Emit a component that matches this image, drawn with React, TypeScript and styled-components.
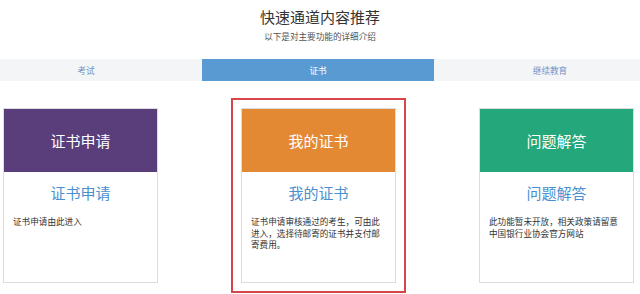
import React, { FC } from 'react';
import styled, { createGlobalStyle } from 'styled-components';

const GlobalStyle = createGlobalStyle`
  body {
    margin: 0;
    background: #fff;
    font-family: "Noto Sans CJK SC", "Liberation Sans", sans-serif;
    overflow: hidden;
  }
`;

const Page = styled.div`
  width: 640px;
  height: 294px;
  overflow: hidden;
`;

const Heading = styled.div`
  display: flex;
  flex-direction: column;
  align-items: center;
  padding-top: 7px;
`;

const Title = styled.h1`
  margin: 0;
  font-size: 15px;
  line-height: 20px;
  font-weight: 400;
  color: #333;
`;

const Subtitle = styled.p`
  margin: 3px 0 0;
  font-size: 8.6px;
  line-height: 12px;
  color: #555;
`;

const TabBar = styled.div`
  display: grid;
  grid-template-columns: repeat(3, 232px);
  margin: 17px 0 0 -30px;
  height: 22px;
`;

const Tab = styled.div<{ $active?: boolean }>`
  display: flex;
  align-items: center;
  justify-content: center;
  font-size: 8.6px;
  background: ${(p) => (p.$active ? '#5a9ad2' : '#f4f5f7')};
  color: ${(p) => (p.$active ? '#fff' : '#6f94c8')};
`;

const CardRow = styled.div`
  display: flex;
  align-items: flex-start;
  gap: 83px;
  padding-left: 3px;
  margin-top: 27px;
`;

const Card = styled.div<{ $highlight?: boolean }>`
  width: 155px;
  height: 175px;
  box-sizing: border-box;
  border: 1px solid #dcdcdc;
  display: flex;
  flex-direction: column;
  outline: ${(p) => (p.$highlight ? '2px solid #d9434a' : 'none')};
  outline-offset: 8px;
`;

const CardHead = styled.div<{ $color: string }>`
  height: 63px;
  background: ${(p) => p.$color};
  color: #fff;
  font-size: 15px;
  display: flex;
  align-items: center;
  justify-content: center;
`;

const CardBody = styled.div`
  padding: 11px 9px 0 9px;
  display: flex;
  flex-direction: column;
`;

const CardTitle = styled.div`
  text-align: center;
  font-size: 15px;
  line-height: 20px;
  color: #4a8fcf;
`;

const CardText = styled.p`
  margin: 13px 0 0;
  font-size: 8.6px;
  line-height: 11.6px;
  color: #333;
`;

const tabs = [
  { label: '考试' },
  { label: '证书', active: true },
  { label: '继续教育' },
];

const cards = [
  {
    title: '证书申请',
    color: '#5a3e7b',
    text: '证书申请由此进入',
  },
  {
    title: '我的证书',
    color: '#e38934',
    text: '证书申请审核通过的考生，可由此进入，选择待邮寄的证书并支付邮寄费用。',
    highlight: true,
  },
  {
    title: '问题解答',
    color: '#23a77b',
    text: '此功能暂未开放，相关政策请留意中国银行业协会官方网站',
  },
];

const App: FC = () => {
  return (
    <Page>
      <GlobalStyle />
      <Heading>
        <Title>快速通道内容推荐</Title>
        <Subtitle>以下是对主要功能的详细介绍</Subtitle>
      </Heading>
      <TabBar>
        {tabs.map((t) => (
          <Tab key={t.label} $active={t.active}>
            {t.label}
          </Tab>
        ))}
      </TabBar>
      <CardRow>
        {cards.map((c) => (
          <Card key={c.title} $highlight={c.highlight}>
            <CardHead $color={c.color}>{c.title}</CardHead>
            <CardBody>
              <CardTitle>{c.title}</CardTitle>
              <CardText>{c.text}</CardText>
            </CardBody>
          </Card>
        ))}
      </CardRow>
    </Page>
  );
};

export default App;
